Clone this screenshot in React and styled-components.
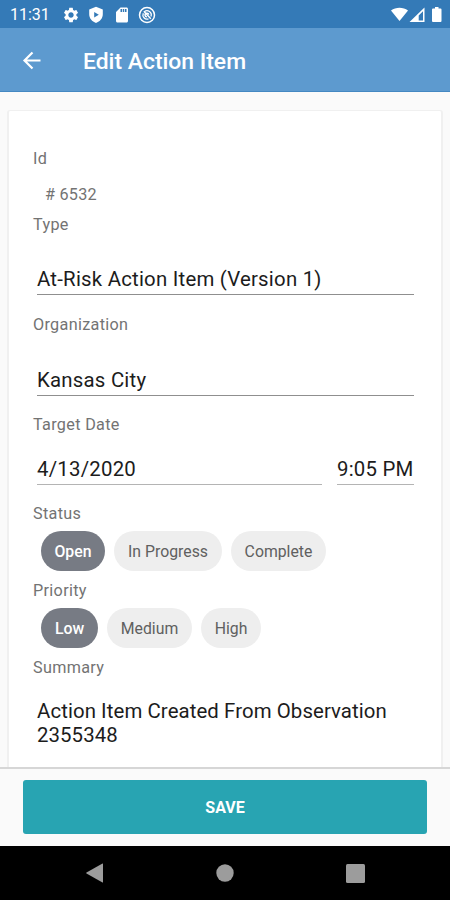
import React, {useState} from 'react';
import styled, {createGlobalStyle} from 'styled-components';
import {MdSettings, MdSdCard} from 'react-icons/md';

const GlobalStyle = createGlobalStyle`
    body {
        margin: 0;
        background: #fafafa;
        font-family: Roboto, "Liberation Sans", sans-serif;
    }
    * {
        box-sizing: border-box;
    }
`;

const Screen = styled.div`
    width: 450px;
    height: 900px;
    display: flex;
    flex-direction: column;
    overflow: hidden;
    background: #fafafa;
`;

const StatusBar = styled.div`
    height: 28px;
    flex: none;
    display: flex;
    align-items: center;
    padding: 1px 7px 0 10px;
    background: #347ab7;
    color: #fff;
`;

const Clock = styled.span`
    width: 51.5px;
    padding-top: 1px;
    font-size: 16px;
    line-height: 20px;
`;

const Notifications = styled.div`
    display: flex;
    align-items: center;
    gap: 7.5px;
    flex: 1;
    svg {
        display: block;
    }
`;

const Signals = styled.div`
    display: flex;
    align-items: center;
    svg {
        display: block;
    }
`;

const Toolbar = styled.header`
    height: 64px;
    flex: none;
    display: flex;
    align-items: center;
    padding: 2px 22px 0;
    background: #5d9acf;
    border-bottom: 1px solid #4488c2;
    color: #fff;
`;

const BackBtn = styled.button`
    width: 61px;
    height: 24px;
    padding: 0;
    border: none;
    background: none;
    color: inherit;
    cursor: pointer;
    svg {
        display: block;
    }
`;

const Title = styled.h1`
    margin: 3px 0 0;
    font-size: 22.9px;
    font-weight: 500;
    line-height: 30px;
`;

const Content = styled.main`
    flex: 1;
    min-height: 0;
    overflow: hidden;
    padding: 18px 7px 0;
`;

const Card = styled.div`
    height: 760px;
    padding: 36px 27px 0 24px;
    background: #fff;
    border: 1px solid #f0f0f0;
    border-width: 1px 2px;
    border-radius: 3px;
`;

const Label = styled.div`
    height: 24px;
    margin-top: ${props => props.$top || 0}px;
    font-size: 16.2px;
    line-height: 24px;
    letter-spacing: 0.32px;
    color: #737373;
`;

const IdValue = styled(Label)`
    padding-left: 12px;
    letter-spacing: 0.25px;
`;

const Field = styled.div`
    width: ${props => props.$width ? `${props.$width}px` : 'auto'};
    margin: ${props => props.$top || 0}px 0 0 4px;
    padding-bottom: 3px;
    border-bottom: 1px solid ${props => props.$light ? '#b4b4b4' : '#8f8f8f'};
    font-size: 20.4px;
    line-height: 24px;
    letter-spacing: 0.22px;
    white-space: nowrap;
    color: #1c1c1c;
`;

const DateRow = styled.div`
    display: flex;
    justify-content: space-between;
`;

const Chips = styled.div`
    display: flex;
    gap: 9px;
    margin: 5px 0 0 8px;
`;

const Chip = styled.button`
    width: ${props => props.$width}px;
    height: 40px;
    padding: 1px 0 0;
    border: none;
    border-radius: 20px;
    background: ${props => props.$active ? '#777b84' : '#eee'};
    color: ${props => props.$active ? '#fff' : '#606060'};
    font-family: inherit;
    font-size: 15.8px;
    font-weight: ${props => props.$active ? 500 : 400};
    line-height: 39px;
    cursor: pointer;
`;

const Summary = styled.p`
    margin: 19px 0 0 4px;
    font-size: 20.4px;
    line-height: 24px;
    letter-spacing: 0.08px;
    color: #1c1c1c;
`;

const Footer = styled.footer`
    height: 79px;
    flex: none;
    padding: 11px 23px 0;
    border-top: 2px solid #d6d6d6;
    background: #fafafa;
`;

const SaveBtn = styled.button`
    display: block;
    width: 100%;
    height: 54px;
    padding: 0;
    border: none;
    border-radius: 3px;
    background: #28a4b2;
    color: #fff;
    font-family: inherit;
    font-size: 16px;
    font-weight: 700;
    cursor: pointer;
`;

const NavBar = styled.nav`
    height: 54px;
    flex: none;
    display: flex;
    align-items: center;
    justify-content: space-between;
    padding: 0 85px;
    background: #000;
    color: #9c9c9c;
`;

const ShieldIcon = () => (
    <svg width="18" height="18" viewBox="0 0 18 18">
        <path fill="currentColor" fillRule="evenodd" d="M9 .8 2.2 3.6v4.7c0 4 2.8 7.3 6.8 8.7 4-1.4 6.8-4.7 6.8-8.7V3.6zM7.2 6v5.400l4.600-2.700z" />
    </svg>
);

const CircleIcon = () => (
    <svg width="18" height="18" viewBox="0 0 18 18" fill="none" stroke="currentColor">
        <circle cx="9" cy="9" r="7.5" strokeWidth="1.5" />
        <path strokeWidth="1.3" d="M12.9 10.5A4.2 4.2 0 0 0 6.3 5.7M5.3 7.2A4.2 4.2 0 0 0 10.5 12.9" />
        <path strokeWidth="1.4" d="M5.8 5.3l7 7.5M10.8 8.7A1.9 1.9 0 1 0 9 10.9" />
    </svg>
);

const SignalIcons = () => (
    <svg width="52" height="18" viewBox="0 0 52 18" fill="currentColor">
        <path d="M0 4.5C4.8 .9 12.2 .9 17 4.5L8.5 15z" />
        <path fillRule="evenodd" d="M33.5 1.5V16H18.500zM32 5.2l-4.3 4.2v5.100H32z" />
        <path d="M42 2.5h2V1h3.500v1.500h2a1 1 0 0 1 1 1V15a1 1 0 0 1-1 1h-7.500a1 1 0 0 1-1-1V3.500a1 1 0 0 1 1-1z" />
    </svg>
);

const BackIcon = () => (
    <svg width="20" height="24" viewBox="0 0 20 24" fill="none" stroke="currentColor" strokeWidth="2.2">
        <path d="M18.5 11.5H2.5M10.5 3.5 2.5 11.5l8 8" />
    </svg>
);

const STATUSES = [
    {name: 'Open', width: 64},
    {name: 'In Progress', width: 108},
    {name: 'Complete', width: 95}
];

const PRIORITIES = [
    {name: 'Low', width: 57},
    {name: 'Medium', width: 85},
    {name: 'High', width: 60}
];

function ChipGroup({items, value, onChange}){
    return(
        <Chips>
            {items.map(item => (
                <Chip
                    key={item.name}
                    type="button"
                    $width={item.width}
                    $active={item.name === value}
                    onClick={() => onChange(item.name)}
                >
                    {item.name}
                </Chip>
            ))}
        </Chips>
    );
}

export default function App(){

    const [status, setStatus] = useState('Open');
    const [priority, setPriority] = useState('Low');

    return(
        <Screen>
            <GlobalStyle />
            <StatusBar>
                <Clock>11:31</Clock>
                <Notifications>
                    <MdSettings size={18} />
                    <ShieldIcon />
                    <MdSdCard size={18} />
                    <CircleIcon />
                </Notifications>
                <Signals>
                    <SignalIcons />
                </Signals>
            </StatusBar>
            <Toolbar>
                <BackBtn type="button"><BackIcon /></BackBtn>
                <Title>Edit Action Item</Title>
            </Toolbar>
            <Content>
                <Card>
                    <Label>Id</Label>
                    <IdValue $top={12}># 6532</IdValue>
                    <Label $top={6}>Type</Label>
                    <Field $top={30}>At-Risk Action Item (Version 1)</Field>
                    <Label $top={18}>Organization</Label>
                    <Field $top={31}>Kansas City</Field>
                    <Label $top={17}>Target Date</Label>
                    <DateRow>
                        <Field $top={20} $width={285} $light>4/13/2020</Field>
                        <Field $top={20} $width={77} $light>9:05 PM</Field>
                    </DateRow>
                    <Label $top={17}>Status</Label>
                    <ChipGroup items={STATUSES} value={status} onChange={setStatus} />
                    <Label $top={8}>Priority</Label>
                    <ChipGroup items={PRIORITIES} value={priority} onChange={setPriority} />
                    <Label $top={8}>Summary</Label>
                    <Summary>Action Item Created From Observation 2355348</Summary>
                </Card>
            </Content>
            <Footer>
                <SaveBtn type="button">SAVE</SaveBtn>
            </Footer>
            <NavBar>
                <svg width="19" height="20" viewBox="0 0 19 20" fill="currentColor">
                    <path d="M17.5 .5Q18 .3 18 1v18q0 .7-.5 .5L1.5 10.5Q.8 10 1.5 9.5z" />
                </svg>
                <svg width="18" height="18" viewBox="0 0 18 18" fill="currentColor">
                    <circle cx="9" cy="9" r="8.7" />
                </svg>
                <svg width="19" height="19" viewBox="0 0 19 19" fill="currentColor">
                    <rect width="19" height="19" rx="1.5" />
                </svg>
            </NavBar>
        </Screen>
    );
}
